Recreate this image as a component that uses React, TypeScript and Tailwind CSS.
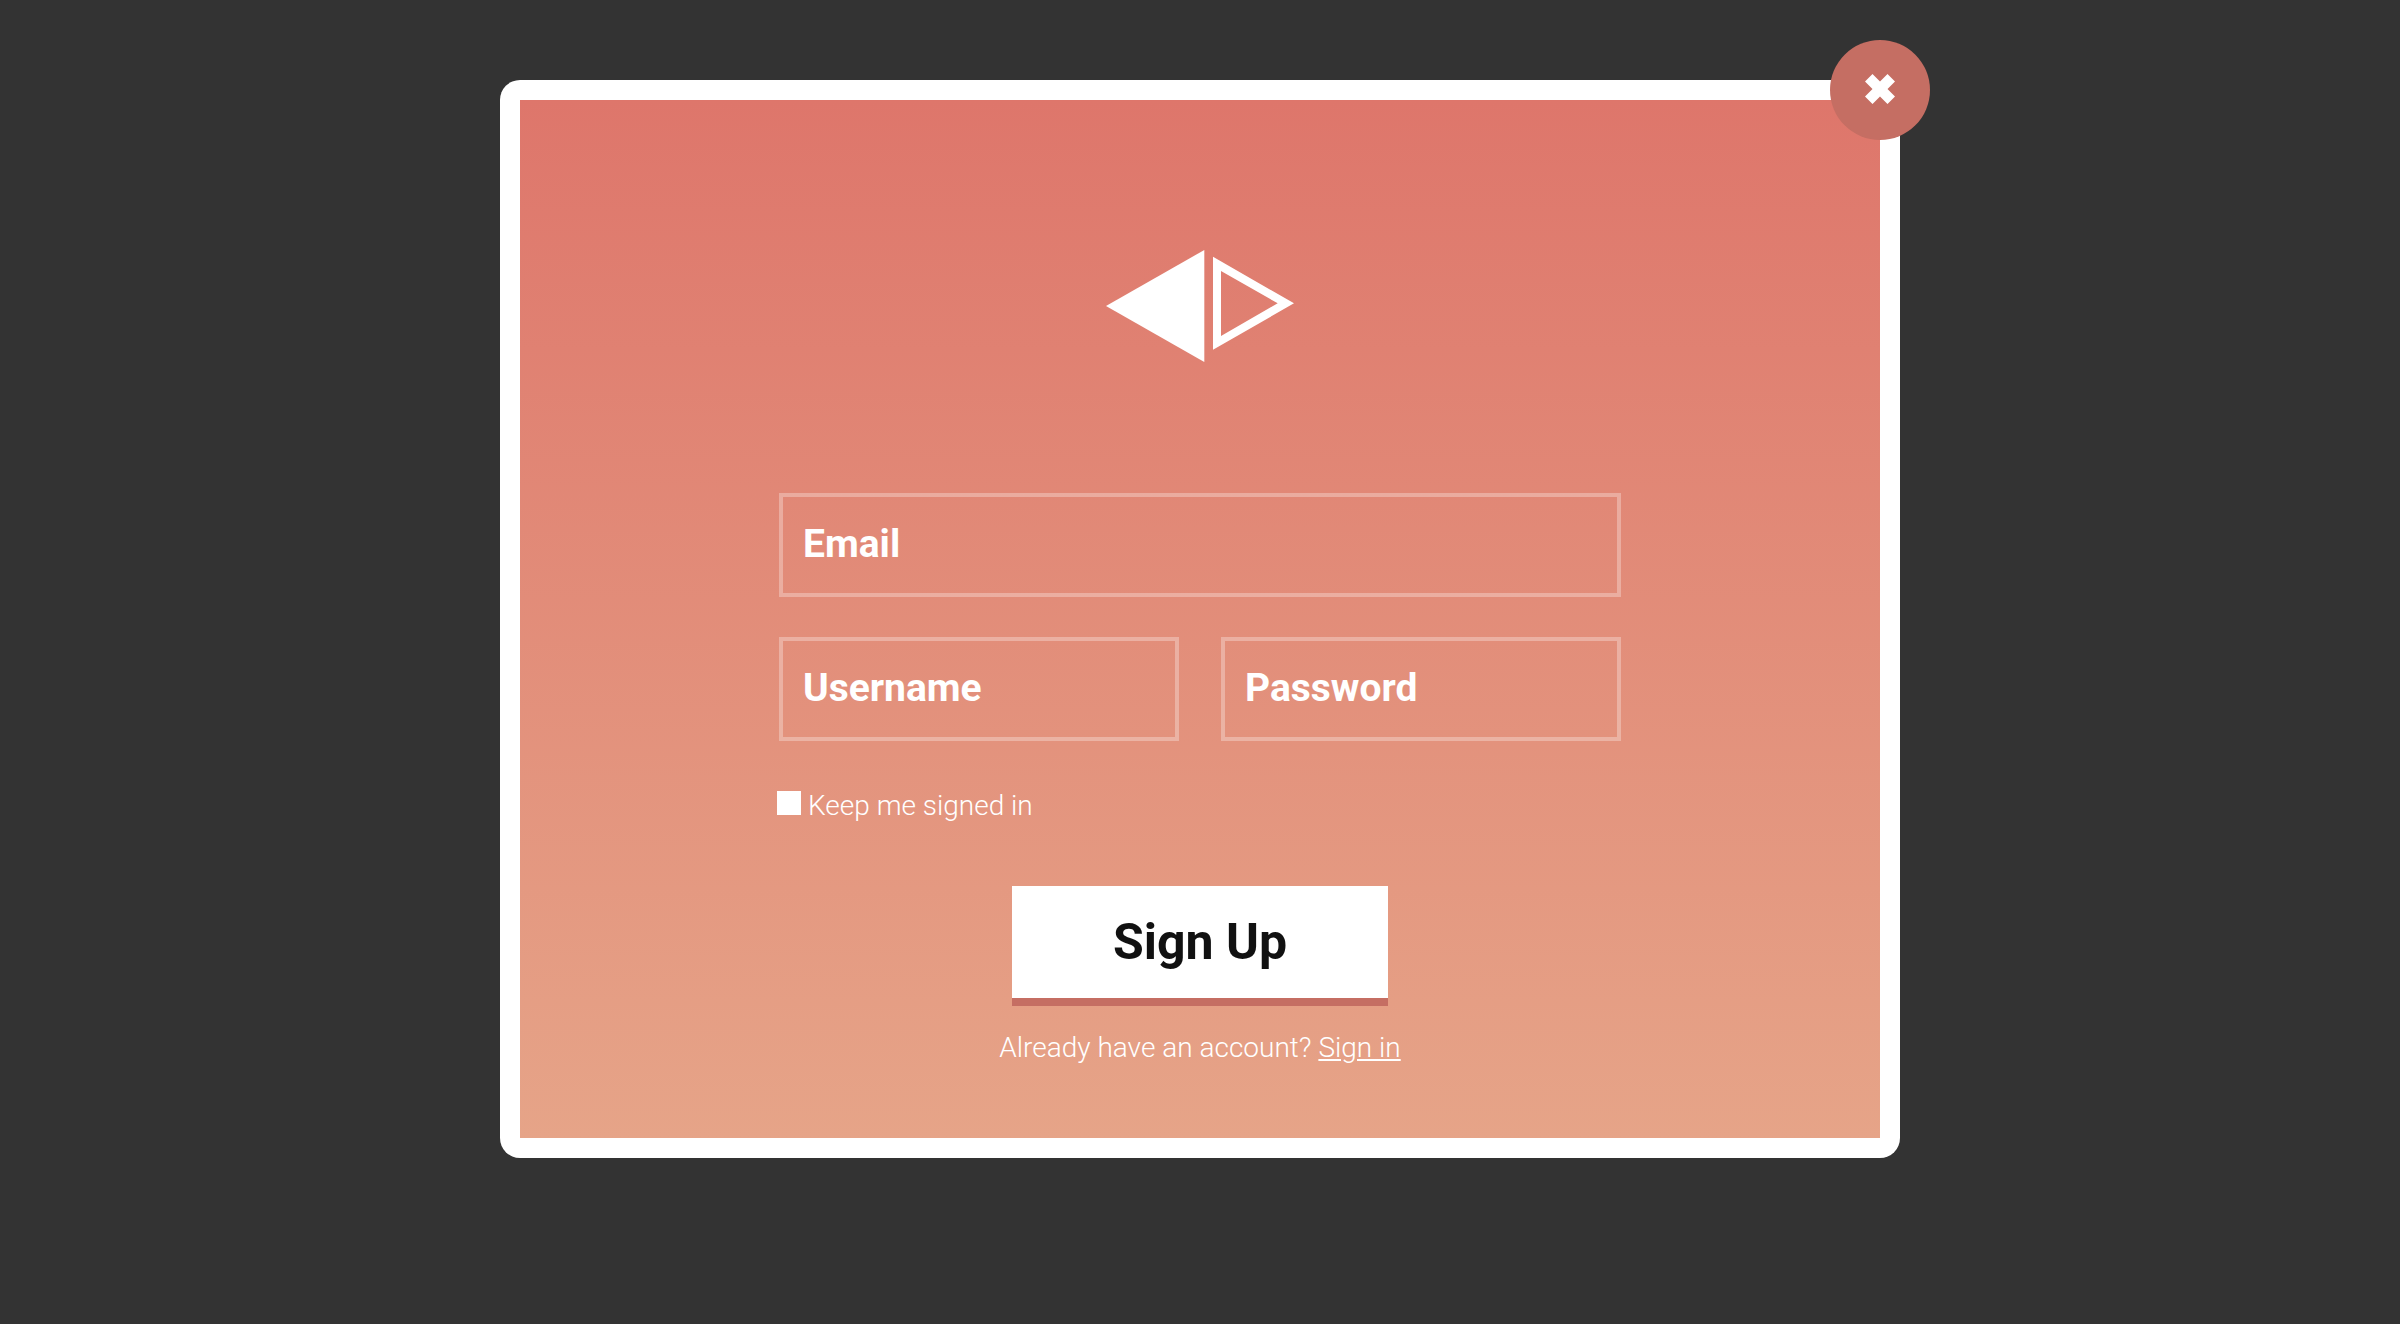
import type { InputHTMLAttributes } from "react";

type FieldProps = InputHTMLAttributes<HTMLInputElement> & { id: string; label: string };

function Field({ id, label, ...rest }: FieldProps) {
  return (
    <input
      id={id}
      aria-label={label}
      placeholder={label}
      className="block h-26 w-full min-w-0 flex-1 border-4 border-white/30 bg-transparent px-5 pb-0.5 text-[39px] leading-[56px] font-bold text-white outline-none placeholder:text-white placeholder:opacity-100 focus:border-white/60"
      {...rest}
    />
  );
}

function Logo() {
  return (
    <svg width="188" height="112" viewBox="0 0 188 112" fill="#fff" aria-hidden="true">
      <path d="M0 56 98.3 0V112Z" />
      <path fillRule="evenodd" d="M107 6.7 188 53.3 107 99.7ZM115 21V86L171.7 53.3Z" />
    </svg>
  );
}

export default function App() {
  return (
    <div className="min-h-screen bg-[#333333] py-20 font-['Roboto',sans-serif]">
      <main className="relative mx-auto w-full max-w-[1400px] rounded-[20px] bg-white p-5">
        <button
          type="button"
          aria-label="Close"
          className="absolute -top-10 -right-[30px] flex size-25 items-center justify-center rounded-full bg-[#c56e63] pb-0.5"
        >
          <svg width="30" height="30" viewBox="0 0 30 30" fill="#fff" aria-hidden="true">
            <path d="M7.5 0 15 7.5 22.5 0 30 7.5 22.5 15 30 22.5 22.5 30 15 22.5 7.5 30 0 22.5 7.5 15 0 7.5Z" />
          </svg>
        </button>
        <form
          className="flex flex-col items-center bg-linear-to-b/srgb from-[#de766b] to-[#e6a488] px-6 pt-[150px] pb-[74px] text-[28px] leading-8 font-light text-white"
          onSubmit={(e) => e.preventDefault()}
        >
          <Logo />
          <div className="mt-[131px] flex w-full max-w-[842px] flex-col gap-10">
            <div className="flex">
              <Field id="email" label="Email" type="email" />
            </div>
            <div className="flex gap-[42px]">
              <Field id="username" label="Username" type="text" />
              <Field id="password" label="Password" type="password" />
            </div>
          </div>
          <div className="mt-[50px] flex w-full max-w-[846px] items-start gap-[7px] leading-[30px]">
            <input
              id="keep"
              type="checkbox"
              className="size-6 appearance-none bg-white checked:border-4 checked:border-white checked:bg-[#c56e63]"
            />
            <label htmlFor="keep">Keep me signed in</label>
          </div>
          <button
            type="submit"
            className="mt-[65px] h-30 w-[376px] border-b-8 border-[#c56e63] bg-white text-[50px] leading-[60px] font-bold text-[#111111]"
          >
            Sign Up
          </button>
          <p className="mt-[26px]">
            Already have an account?{" "}
            <a href="#signin" className="underline">
              Sign in
            </a>
          </p>
        </form>
      </main>
    </div>
  );
}
